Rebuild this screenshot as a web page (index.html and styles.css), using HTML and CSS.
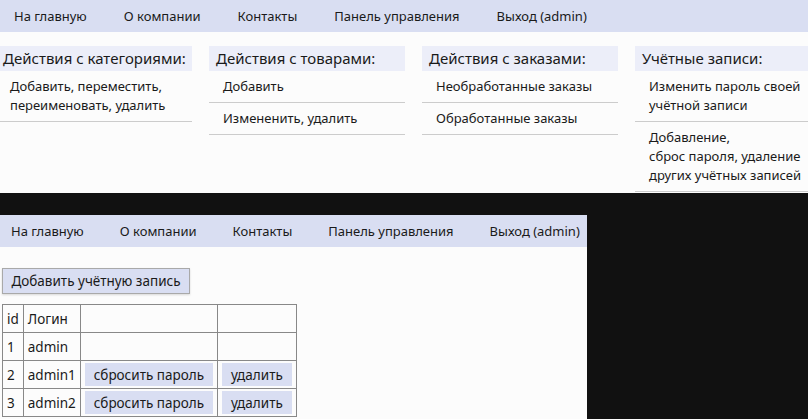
FILE: index.html
```html
<!DOCTYPE html>
<html lang="ru">
<head>
<meta charset="utf-8">
<title>Панель управления</title>
<link rel="stylesheet" href="styles.css">
</head>
<body>
<div class="screen screen-top">
  <nav class="nav">
    <a href="#">На главную</a>
    <a href="#">О компании</a>
    <a href="#">Контакты</a>
    <a href="#">Панель управления</a>
    <a href="#">Выход (admin)</a>
  </nav>
  <div class="panels">
    <section class="panel">
      <h2 class="panel-title">Действия с категориями:</h2>
      <a class="panel-item" href="#">Добавить, переместить,<br>переименовать, удалить</a>
    </section>
    <section class="panel">
      <h2 class="panel-title">Действия с товарами:</h2>
      <a class="panel-item" href="#">Добавить</a>
      <a class="panel-item" href="#">Измененить, удалить</a>
    </section>
    <section class="panel">
      <h2 class="panel-title">Действия с заказами:</h2>
      <a class="panel-item" href="#">Необработанные заказы</a>
      <a class="panel-item" href="#">Обработанные заказы</a>
    </section>
    <section class="panel">
      <h2 class="panel-title">Учётные записи:</h2>
      <a class="panel-item" href="#">Изменить пароль своей<br>учётной записи</a>
      <a class="panel-item" href="#">Добавление,<br>сброс пароля, удаление<br>других учётных записей</a>
    </section>
  </div>
</div>

<div class="screen screen-bottom">
  <nav class="nav nav-small">
    <a href="#">На главную</a>
    <a href="#">О компании</a>
    <a href="#">Контакты</a>
    <a href="#">Панель управления</a>
    <a href="#">Выход (admin)</a>
  </nav>
  <div class="accounts">
    <button class="btn btn-add">Добавить учётную запись</button>
    <table class="users">
      <tr><td>id</td><td>Логин</td><td class="c3"></td><td class="c4"></td></tr>
      <tr><td>1</td><td>admin</td><td></td><td></td></tr>
      <tr><td>2</td><td>admin1</td><td><button class="btn btn-cell">сбросить пароль</button></td><td><button class="btn btn-cell btn-del">удалить</button></td></tr>
      <tr><td>3</td><td>admin2</td><td><button class="btn btn-cell">сбросить пароль</button></td><td><button class="btn btn-cell btn-del">удалить</button></td></tr>
    </table>
  </div>
</div>
</body>
</html>
```
FILE: styles.css
```css
html, body {
  margin: 0;
  padding: 0;
}
body {
  background: #111111;
  font-family: "Noto Sans", "Open Sans", "DejaVu Sans", sans-serif;
  font-size: 13px;
  color: #1a1a1a;
  width: 808px;
  height: 419px;
  overflow: hidden;
}
a {
  color: inherit;
  text-decoration: none;
}
.screen {
  background: #fcfcfc;
  overflow: hidden;
}
.screen-top {
  width: 808px;
  height: 193px;
}
.screen-bottom {
  margin-top: 22px;
  width: 587px;
  height: 204px;
}
.nav {
  display: flex;
  gap: 37px;
  height: 32px;
  line-height: 32px;
  padding-left: 14px;
  background: #d9def2;
  white-space: nowrap;
}
.nav-small {
  gap: 36px;
  padding-left: 11px;
}
.panels {
  display: grid;
  grid-template-columns: 196px 196px 196px 196px;
  column-gap: 17px;
  margin-left: -4px;
  margin-top: 14px;
  align-items: start;
}
.panel {
  display: flex;
  flex-direction: column;
}
.panel-title {
  margin: 0;
  font-weight: normal;
  font-size: 15px;
  line-height: 25px;
  height: 25px;
  padding-left: 7px;
  background: #eceef9;
  white-space: nowrap;
}
.panel-item {
  padding: 6px 0 6px 14px;
  line-height: 19px;
  border-bottom: 1px solid #cccccc;
  white-space: nowrap;
}
.accounts {
  padding: 21px 0 0 2px;
  font-size: 13.5px;
}
.btn {
  font-family: inherit;
  font-size: 13.5px;
  color: #1a1a1a;
  background: #d9def2;
  cursor: pointer;
}
.btn-add {
  display: block;
  width: 188px;
  height: 26px;
  padding: 0;
  border: 1px solid #a9a9a9;
  box-shadow: 0 1px 2px rgba(0,0,0,0.15);
}
.users {
  margin-top: 10px;
  border-collapse: collapse;
  border: 1px solid #888888;
}
.users td {
  border: 1px solid #888888;
  padding: 2px 4px;
  height: 23px;
  white-space: nowrap;
}
.users .c3 { width: 128px; }
.users .c4 { width: 70px; }
.btn-cell {
  display: block;
  height: 23px;
  padding: 0 8px;
  border: none;
  width: 128px;
}
.btn-del {
  width: 70px;
}
```
